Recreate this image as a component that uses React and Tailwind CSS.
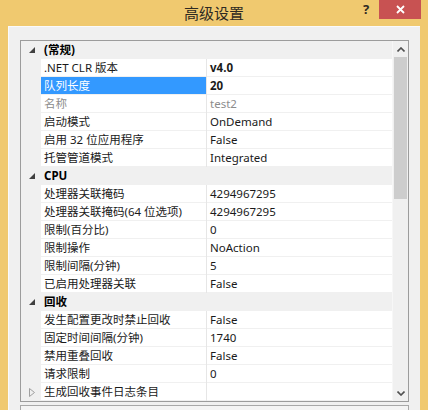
import React from 'react';

// Property grid data: categories with their rows
const groups = [
  {
    name: '(常规)',
    items: [
      { label: '.NET CLR 版本', value: 'v4.0', bold: true },
      { label: '队列长度', value: '20', bold: true, selected: true },
      { label: '名称', value: 'test2', disabled: true },
      { label: '启动模式', value: 'OnDemand' },
      { label: '启用 32 位应用程序', value: 'False' },
      { label: '托管管道模式', value: 'Integrated' },
    ],
  },
  {
    name: 'CPU',
    items: [
      { label: '处理器关联掩码', value: '4294967295' },
      { label: '处理器关联掩码(64 位选项)', value: '4294967295' },
      { label: '限制(百分比)', value: '0' },
      { label: '限制操作', value: 'NoAction' },
      { label: '限制间隔(分钟)', value: '5' },
      { label: '已启用处理器关联', value: 'False' },
    ],
  },
  {
    name: '回收',
    items: [
      { label: '发生配置更改时禁止回收', value: 'False' },
      { label: '固定时间间隔(分钟)', value: '1740' },
      { label: '禁用重叠回收', value: 'False' },
      { label: '请求限制', value: '0' },
      { label: '生成回收事件日志条目', value: '', collapsed: true },
    ],
  },
];

function ExpandedArrow() {
  return (
    <svg width="6" height="6" viewBox="0 0 6 6">
      <polygon points="6,0 6,6 0,6" fill="#404040" />
    </svg>
  );
}

function CollapsedArrow() {
  return (
    <svg width="6" height="9" viewBox="0 0 6 9">
      <polygon points="0.5,0.5 5.5,4.5 0.5,8.5" fill="none" stroke="#a0a0a0" strokeWidth="1" />
    </svg>
  );
}

function Chevron({ down }) {
  return (
    <svg width="8" height="5" viewBox="0 0 8 5">
      <polyline
        points={down ? '0.5,0.5 4,4 7.5,0.5' : '0.5,4.5 4,1 7.5,4.5'}
        fill="none"
        stroke="#505050"
        strokeWidth="1.6"
      />
    </svg>
  );
}

function CategoryRow({ name }) {
  return (
    <div className="flex h-[18px] bg-[#f0f0f0]">
      <div className="w-[20px] flex items-center justify-center pl-[2px]">
        <ExpandedArrow />
      </div>
      <div className="pl-[3px] font-bold text-black leading-[18px]">{name}</div>
    </div>
  );
}

function PropertyRow({ item }) {
  const labelCls = item.selected
    ? 'bg-[#3399ff] text-white'
    : item.disabled
    ? 'bg-white text-[#8c8c8c]'
    : 'bg-white text-[#1a1a1a]';
  const valueCls = item.disabled ? 'text-[#8c8c8c]' : 'text-[#1a1a1a]';
  return (
    <div className="flex h-[18px]">
      <div className="w-[20px] bg-[#f0f0f0] flex items-center justify-center pl-[2px]">
        {item.collapsed && <CollapsedArrow />}
      </div>
      <div className={`w-[165px] pl-[3px] leading-[18px] border-b border-[#f0f0f0] whitespace-nowrap overflow-hidden ${labelCls}`}>
        {item.label}
      </div>
      <div className="w-px bg-[#e6e6e6]" />
      <div className={`flex-1 bg-white pl-[3px] leading-[18px] border-b border-[#f0f0f0] ${valueCls} ${item.bold ? 'font-bold' : ''}`}>
        {item.value}
      </div>
    </div>
  );
}

function ScrollBar() {
  return (
    <div className="w-[16px] flex flex-col bg-[#f0f0f0] border-l border-[#f7f7f7]">
      <div className="h-[16px] flex items-center justify-center">
        <Chevron />
      </div>
      <div className="flex-1 px-[1px]">
        <div className="h-[142px] bg-[#cdcdcd]" />
      </div>
      <div className="h-[16px] flex items-center justify-center">
        <Chevron down />
      </div>
    </div>
  );
}

export default function App() {
  return (
    <div
      className="w-[428px] h-[410px] overflow-hidden bg-[#f0c96f] flex flex-col text-[11.5px]"
      style={{ fontFamily: '"Noto Sans", "Noto Sans CJK SC", sans-serif' }}
    >
      {/* title bar */}
      <div className="h-[26px] flex shrink-0">
        <div className="flex-1" />
        <div
          className="text-[15px] leading-[26px] text-[#2e2a22]"
          style={{ fontFamily: '"Noto Sans CJK SC", sans-serif' }}
        >
          高级设置
        </div>
        <div className="flex-1 flex justify-end items-start">
          <div className="w-[12px] mr-[7px] text-[13px] font-bold leading-[19px] text-center text-[#2e2a22]">?</div>
          <div className="w-[42px] h-[19px] mr-[7px] bg-[#c85252] flex items-center justify-center">
            <svg width="9" height="9" viewBox="0 0 9 9">
              <path d="M1 1 L8 8 M8 1 L1 8" stroke="#ffffff" strokeWidth="1.8" />
            </svg>
          </div>
        </div>
      </div>

      {/* dialog body */}
      <div className="flex-1 mx-[8px] bg-[#f0f0f0] border-t border-l border-[#fafafa] pt-[13px] pl-[11px] pr-[11px] flex flex-col gap-[3px]">
        <div className="w-[389px] h-[362px] shrink-0 border border-[#9c9c9c] bg-white flex">
          <div className="flex-1 flex flex-col">
            {groups.map((g) => (
              <React.Fragment key={g.name}>
                <CategoryRow name={g.name} />
                {g.items.map((it) => (
                  <PropertyRow key={it.label} item={it} />
                ))}
              </React.Fragment>
            ))}
          </div>
          <ScrollBar />
        </div>
        <div className="w-[389px] h-[40px] shrink-0 border border-[#a8a8a8] bg-[#f4f4f4]" />
      </div>
    </div>
  );
}
